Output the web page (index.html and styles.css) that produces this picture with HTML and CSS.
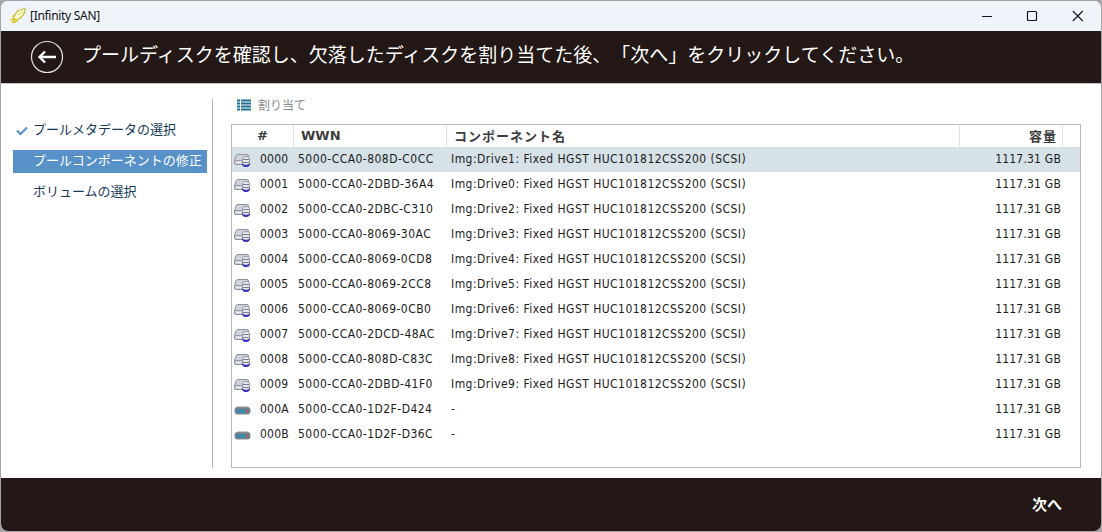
FILE: index.html
```html
<!DOCTYPE html>
<html lang="ja">
<head>
    <meta charset="UTF-8">
    <title>[Infinity SAN]</title>
    <link rel="stylesheet" href="styles.css">
</head>
<body>
    <svg class="sprite">
        <symbol id="disk" viewBox="0 0 18 14">
            <path d="M5 1.500h9q1.500 0 1.500 1.500V10q0 1.500-1.500 1.500H3Q1.500 11.500 1.500 10V7.500L3 3Q3.500 1.500 5 1.500z" fill="#d0d3db" stroke="#8d919b"/>
            <path d="M2 7.500h8" stroke="#989daa"/>
            <path d="M3 9.500h5" stroke="#eceef3"/>
            <path d="M9 9.500h8v2Q16 14 13 14t-4-2.500z" fill="#1f16c4"/>
            <path d="M9.500 5q0-1.500 3.500-1.500T16.500 5v5.500q-1 1.500-3.500 1.500t-3.500-1.500z" fill="#e6e8ee" stroke="#858a98" stroke-width=".8"/>
            <path d="M10 6.500h6M10 9.500h6" fill="none" stroke="#7b8090"/>
        </symbol>
        <symbol id="drive" viewBox="0 0 18 14">
            <path d="M4.500 3.500h10l2 2h-14z" fill="#e2e3e5" stroke="#bcbcc0" stroke-width=".7"/>
            <rect x="2" y="4.500" width="15" height="6.500" rx="2" fill="#4389a3" stroke="#92888d"/>
            <path d="M3 5.500h13" stroke="#77828c"/>
            <rect x="13" y="7" width="2.500" height="2.500" fill="#d0584e"/>
        </symbol>
    </svg>

    <div class="window">
        <div class="titlebar">
            <svg class="logo" width="18" height="18" viewBox="0 0 18 18">
                <path d="M3 9.500Q6 9 7 6q1-2.500 4-3l4.500-1.500Q17 5 14.500 7q.5 1.500-2 2.500.2 1.500-2 2-1.500.5-2.500 3" fill="#fbf9d0" stroke="#c6bd35" stroke-width="1.200"/>
                <path d="M9 8l5-3.500" fill="none" stroke="#ddd56a"/>
                <path d="M1.500 12.500h7M5 9.500v6.500M2.500 14.500q2.500 2 5-.5" fill="none" stroke="#d2c51f" stroke-width="1.500"/>
            </svg>
            <span class="app-name">[Infinity SAN]</span>
            <svg class="window-buttons" width="102" height="12" viewBox="0 0 102 12">
                <path d="M0 6.500h10M90.800 1l10 10M100.800 1l-10 10" fill="none" stroke="#111" stroke-width="1.100"/>
                <rect x="45.500" y="1.500" width="9" height="9" rx="1" fill="none" stroke="#111" stroke-width="1.200"/>
            </svg>
        </div>

        <div class="header">
            <svg class="back" width="34" height="34" viewBox="0 0 34 34">
                <circle cx="17" cy="17" r="15.500" fill="none" stroke="#e6e3e2" stroke-width="1.200"/>
                <path d="M26 17H10M15 11.500L9.500 17l5.500 5.500" fill="none" stroke="#fff" stroke-width="2.400"/>
            </svg>
            <h1>プールディスクを確認し、欠落したディスクを割り当てた後、「次へ」をクリックしてください。</h1>
        </div>

        <div class="content">
            <ul class="steps">
                <li><svg class="check" width="12" height="10" viewBox="0 0 12 10"><path d="M1 4.500l3.500 3.500L11 1.500" fill="none" stroke="#5b93c9" stroke-width="2.200"/></svg>プールメタデータの選択</li>
                <li class="active">プールコンポーネントの修正</li>
                <li>ボリュームの選択</li>
            </ul>

            <div class="main">
                <div class="toolbar">
                    <svg width="14" height="12" viewBox="0 0 14 12"><path d="M0 1.500h3M0 4.500h3M0 7.500h3M0 10.500h3M4 1.500h10M4 4.500h10M4 7.500h10M4 10.500h10" stroke="#1f6f93" stroke-width="2"/></svg>
                    <span>割り当て</span>
                </div>
                <div class="grid">
                    <table>
                        <colgroup>
                            <col class="col-icon"><col class="col-num"><col class="col-wwn"><col class="col-name"><col class="col-size"><col>
                        </colgroup>
                        <thead>
                            <tr><th></th><th class="num">#</th><th class="wwn">WWN</th><th class="name">コンポーネント名</th><th class="size">容量</th><th></th></tr>
                        </thead>
                        <tbody>
                            <tr class="selected"><td><svg class="icon"><use href="#disk"/></svg></td><td class="num">0000</td><td>5000-CCA0-808D-C0CC</td><td>Img:Drive1: Fixed HGST HUC101812CSS200 (SCSI)</td><td class="size">1117.31 GB</td><td></td></tr>
                            <tr><td><svg class="icon"><use href="#disk"/></svg></td><td class="num">0001</td><td>5000-CCA0-2DBD-36A4</td><td>Img:Drive0: Fixed HGST HUC101812CSS200 (SCSI)</td><td class="size">1117.31 GB</td><td></td></tr>
                            <tr><td><svg class="icon"><use href="#disk"/></svg></td><td class="num">0002</td><td>5000-CCA0-2DBC-C310</td><td>Img:Drive2: Fixed HGST HUC101812CSS200 (SCSI)</td><td class="size">1117.31 GB</td><td></td></tr>
                            <tr><td><svg class="icon"><use href="#disk"/></svg></td><td class="num">0003</td><td>5000-CCA0-8069-30AC</td><td>Img:Drive3: Fixed HGST HUC101812CSS200 (SCSI)</td><td class="size">1117.31 GB</td><td></td></tr>
                            <tr><td><svg class="icon"><use href="#disk"/></svg></td><td class="num">0004</td><td>5000-CCA0-8069-0CD8</td><td>Img:Drive4: Fixed HGST HUC101812CSS200 (SCSI)</td><td class="size">1117.31 GB</td><td></td></tr>
                            <tr><td><svg class="icon"><use href="#disk"/></svg></td><td class="num">0005</td><td>5000-CCA0-8069-2CC8</td><td>Img:Drive5: Fixed HGST HUC101812CSS200 (SCSI)</td><td class="size">1117.31 GB</td><td></td></tr>
                            <tr><td><svg class="icon"><use href="#disk"/></svg></td><td class="num">0006</td><td>5000-CCA0-8069-0CB0</td><td>Img:Drive6: Fixed HGST HUC101812CSS200 (SCSI)</td><td class="size">1117.31 GB</td><td></td></tr>
                            <tr><td><svg class="icon"><use href="#disk"/></svg></td><td class="num">0007</td><td>5000-CCA0-2DCD-48AC</td><td>Img:Drive7: Fixed HGST HUC101812CSS200 (SCSI)</td><td class="size">1117.31 GB</td><td></td></tr>
                            <tr><td><svg class="icon"><use href="#disk"/></svg></td><td class="num">0008</td><td>5000-CCA0-808D-C83C</td><td>Img:Drive8: Fixed HGST HUC101812CSS200 (SCSI)</td><td class="size">1117.31 GB</td><td></td></tr>
                            <tr><td><svg class="icon"><use href="#disk"/></svg></td><td class="num">0009</td><td>5000-CCA0-2DBD-41F0</td><td>Img:Drive9: Fixed HGST HUC101812CSS200 (SCSI)</td><td class="size">1117.31 GB</td><td></td></tr>
                            <tr><td><svg class="icon"><use href="#drive"/></svg></td><td class="num">000A</td><td>5000-CCA0-1D2F-D424</td><td>-</td><td class="size">1117.31 GB</td><td></td></tr>
                            <tr><td><svg class="icon"><use href="#drive"/></svg></td><td class="num">000B</td><td>5000-CCA0-1D2F-D36C</td><td>-</td><td class="size">1117.31 GB</td><td></td></tr>
                        </tbody>
                    </table>
                </div>
            </div>
        </div>

        <div class="footer">
            <button class="next-btn">次へ</button>
        </div>
    </div>
</body>
</html>
```
FILE: styles.css
```css
* {
    box-sizing: border-box;
}
body {
    margin: 0;
    height: 532px;
    overflow: hidden;
    background: #a5a5a8;
    font-family: "DejaVu Sans Condensed", "Noto Sans CJK JP", sans-serif;
    font-size: 12px;
    color: #1c1c1c;
}
.sprite {
    display: none;
}
.window {
    height: 530px;
    margin: 1px;
    display: flex;
    flex-direction: column;
    background: #fff;
    border-radius: 7px;
    overflow: hidden;
}
.titlebar {
    height: 30px;
    display: flex;
    align-items: center;
    padding: 0 17px 1px 8px;
    background: #eff4fa;
    flex: none;
}
.app-name {
    margin-left: 3px;
    font-family: "Noto Sans", sans-serif;
    font-size: 12px;
    letter-spacing: -0.3px;
    color: #111;
}
.window-buttons {
    margin-left: auto;
}
.header {
    height: 52px;
    flex: none;
    display: flex;
    align-items: center;
    padding-left: 29px;
    background: #231815;
}
.header h1 {
    margin: 0 0 6px 18px;
    font-family: "Noto Sans CJK JP", sans-serif;
    font-size: 19px;
    font-weight: 400;
    line-height: 28px;
    white-space: nowrap;
    text-spacing-trim: space-all;
    color: #fff;
}
.content {
    flex: 1;
    display: flex;
    padding: 15px 20px 10px 12px;
    border-top: 1px solid #c8c4c2;
}
.steps {
    width: 200px;
    margin: 0;
    padding: 20px 5px 0 0;
    list-style: none;
    border-right: 1px solid #b9b9b9;
    font-family: "Noto Sans CJK JP", sans-serif;
    font-size: 13px;
    color: #153a59;
}
.steps li {
    position: relative;
    height: 23px;
    margin-bottom: 8px;
    padding-left: 20px;
    line-height: 20px;
    white-space: nowrap;
}
.steps .active {
    background: #5891c8;
    color: #fff;
}
.check {
    position: absolute;
    left: 3px;
    top: 7px;
}
.main {
    flex: 1;
    display: flex;
    flex-direction: column;
    padding-left: 18px;
}
.toolbar {
    height: 25px;
    display: flex;
    align-items: flex-start;
    gap: 7px;
    padding-left: 6px;
    font-family: "Noto Sans CJK JP", sans-serif;
    font-size: 12px;
    line-height: 12px;
    color: #8b8b8b;
}
.grid {
    flex: 1;
    border: 1px solid #b9b9b9;
}
table {
    width: 100%;
    table-layout: fixed;
    border-collapse: collapse;
}
.col-icon {
    width: 24px;
}
.col-num {
    width: 38px;
}
.col-wwn {
    width: 153px;
}
.col-name {
    width: 513px;
}
.col-size {
    width: 103px;
}
th {
    height: 22px;
    padding: 0 0 0 7px;
    font-family: "DejaVu Sans", sans-serif;
    font-size: 13px;
    font-weight: bold;
    line-height: 20px;
    text-align: left;
    color: #3c3c3c;
    box-shadow: inset -1px 0 #e2e2e2;
}
th:first-child,
th:last-child {
    box-shadow: none;
}
th.num {
    padding-left: 1px;
}
th.name,
th.size {
    font-family: "Noto Sans CJK JP", sans-serif;
    font-size: 13px;
    letter-spacing: 1px;
    line-height: 18px;
}
td {
    height: 25px;
    padding: 0 0 0 4px;
    line-height: 23px;
    letter-spacing: 0.46px;
    white-space: nowrap;
}
td:first-child {
    padding-left: 1px;
}
td.num {
    letter-spacing: 0.2px;
}
td.size {
    padding: 0 2px 0 0;
    letter-spacing: 0.2px;
    text-align: right;
}
th.size {
    padding: 0 6px 0 0;
    text-align: right;
}
.selected {
    background: #d6e1e8;
}
.icon {
    display: block;
    width: 18px;
    height: 14px;
}
.footer {
    height: 53px;
    flex: none;
    display: flex;
    align-items: center;
    justify-content: flex-end;
    padding: 0 39px 3px 0;
    background: #231815;
}
.next-btn {
    padding: 0;
    border: none;
    background: none;
    font-family: "Noto Sans CJK JP", sans-serif;
    font-size: 15px;
    font-weight: bold;
    color: #fff;
    cursor: pointer;
}
```
